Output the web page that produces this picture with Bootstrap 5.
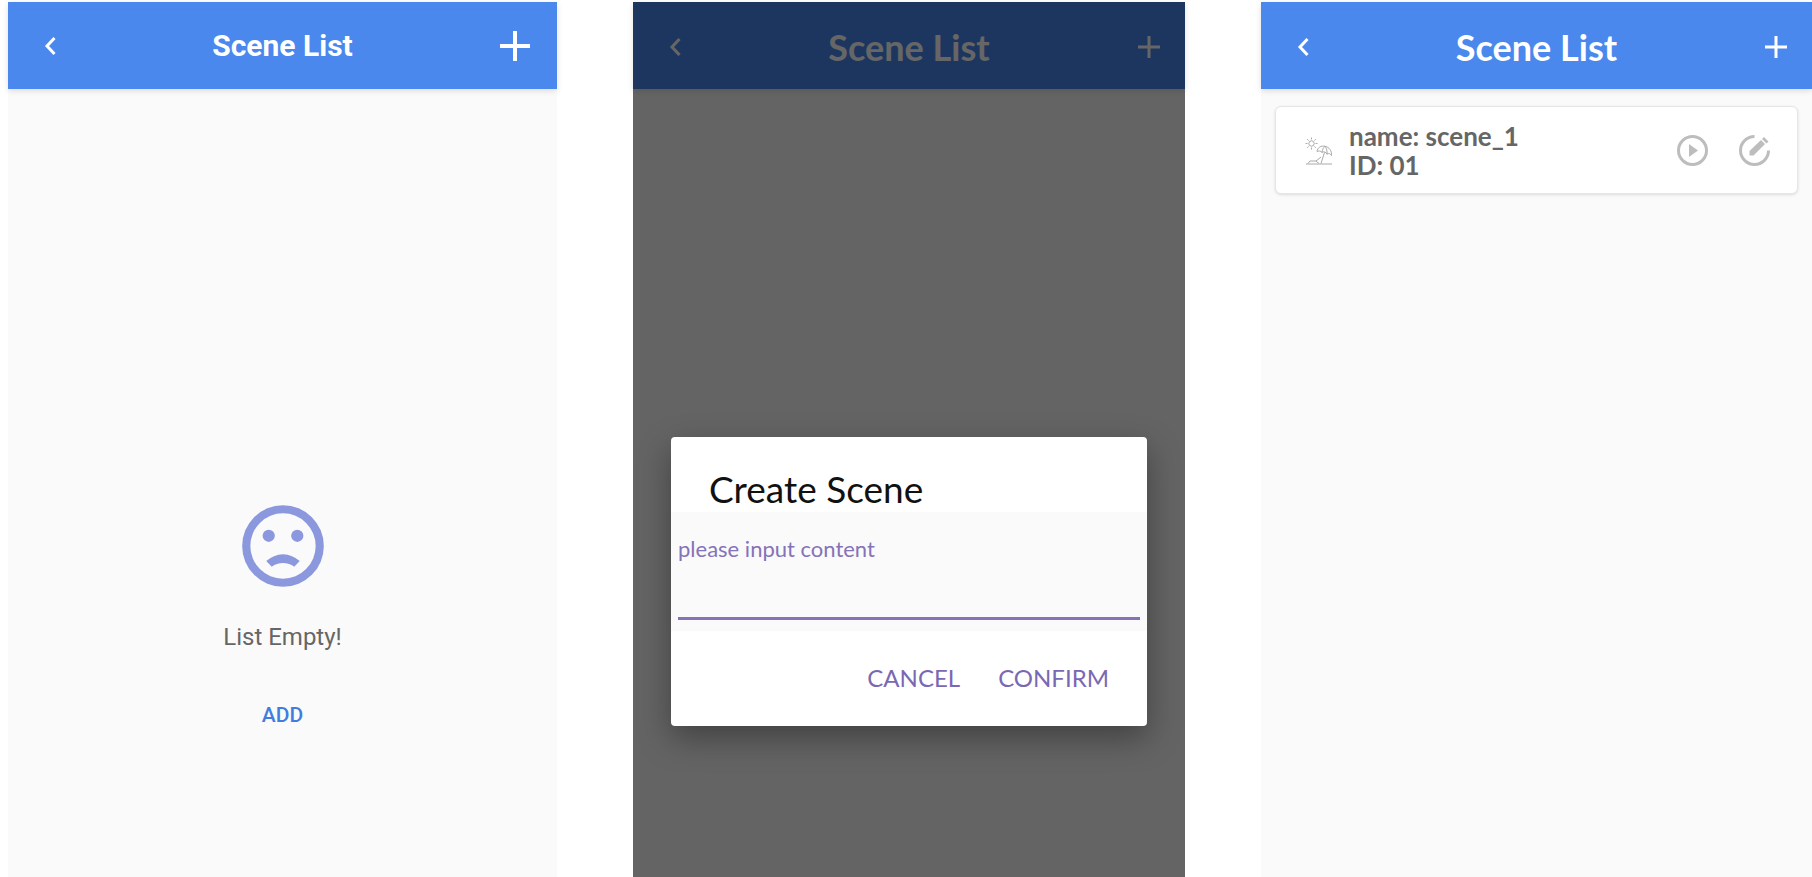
<!DOCTYPE html>
<html lang="en">
<head>
<meta charset="utf-8">
<meta name="viewport" content="width=device-width, initial-scale=1">
<title>Scene List</title>
<link href="https://cdn.jsdelivr.net/npm/bootstrap@5.3.0/dist/css/bootstrap.min.css" rel="stylesheet">
<style>
  body { background: #fff; font-family: Lato, "Open Sans", sans-serif; }
  .screens { display: grid; grid-template-columns: 549fr 552fr 551fr; column-gap: 76px; padding: 2px 0 0 8px; }
  .screen { background: #fafafa; }
  .font-roboto { font-family: Roboto, sans-serif; }
  .topbar { background: #4a88ed; height: 87px; padding: 2px 17px 0; box-shadow: 0 2px 6px rgba(0,0,0,.12); color: #fff; }
  .topbar h1 { font-size: 36px; line-height: 40px; font-weight: 700; }
  .tool { width: 38px; height: 48px; padding: 0; border: 0; color: inherit; display: flex; align-items: center; justify-content: center; }
  .tool:hover { color: inherit; }
  .tool-back { padding-left: 12px; }
  .font-roboto .topbar { padding: 0 23px; }
  .font-roboto .topbar h1 { font-size: 30px; }
  .font-roboto .tool-back { padding-left: 0; }
  svg { display: block; flex: none; }
  .empty { padding-top: 408px; color: #666; }
  .empty p { font-size: 24px; line-height: 32px; margin: 26px 0 40px; }
  .link-add { color: #3f7ee0; font-size: 21px; line-height: 28px; font-weight: 500; padding: 8px; border: 0; }
  .dim { background: rgba(0,0,0,.6); padding: 435px 38px 0; }
  .dialog-box { background: #fff; border-radius: 4px; box-shadow: 0 12px 32px rgba(0,0,0,.35); color: #111; }
  .dialog-box h2 { font-size: 37px; line-height: 44px; font-weight: 400; margin: 0; padding: 30px 38px 1px; }
  .field { background: #fafafa; padding: 22px 7px 11px; height: 119px; }
  .field label { display: block; font-size: 22px; line-height: 30px; color: #8572b9; }
  .field input { height: 56px; padding: 0; border: 0; border-bottom: 3px solid #8572b9; border-radius: 0; background: transparent; }
  .actions { padding: 27px 30px 28px; gap: 22px; }
  .actions button { color: #7a68b3; font-size: 24px; line-height: 24px; padding: 8px; border: 0; }
  .scene-item { margin: 17px 14px 0; height: 88px; padding: 1px 24px 0 29px; border: 1px solid #e6e6e6; border-radius: 6px; background: #fff; box-shadow: 0 1px 3px rgba(0,0,0,.12); color: #666; }
  .scene-text { font-size: 26px; line-height: 29px; font-weight: 700; }
  .muted-tool { color: #bdbdbd; }
</style>
</head>
<body>
<main class="screens min-vh-100">
  <section class="screen font-roboto">
    <header class="topbar d-flex align-items-center justify-content-between">
      <button class="btn tool tool-back" aria-label="Back"><svg width="16" height="22" viewBox="0 0 16 22" fill="none" stroke="currentColor" stroke-width="3"><path d="M12.500 3L5 11l7.500 8"/></svg></button>
      <h1 class="m-0">Scene List</h1>
      <button class="btn tool" aria-label="Add scene"><svg width="30" height="30" viewBox="0 0 30 30" fill="none" stroke="currentColor" stroke-width="4"><path d="M15 0v30M0 15h30"/></svg></button>
    </header>
    <div class="empty d-flex flex-column align-items-center">
      <svg width="98" height="98" viewBox="0 0 24 24" fill="#8b98de"><path d="M12 2a10 10 0 1 0 0 20 10 10 0 0 0 0-20zm0 18a8 8 0 1 1 0-16 8 8 0 0 1 0 16z"/><circle cx="8.500" cy="9.500" r="1.500"/><circle cx="15.500" cy="9.500" r="1.500"/><path d="M12 14a6.400 6.400 0 0 0-4.100 1.700l1.350 1.400a4.600 4.600 0 0 1 5.500 0l1.350-1.400A6.400 6.400 0 0 0 12 14z"/></svg>
      <p>List Empty!</p>
      <button class="btn link-add">ADD</button>
    </div>
  </section>

  <section class="screen position-relative">
    <header class="topbar d-flex align-items-center justify-content-between">
      <button class="btn tool tool-back" aria-label="Back"><svg width="16" height="22" viewBox="0 0 16 22" fill="none" stroke="currentColor" stroke-width="3"><path d="M12.500 3L5 11l7.500 8"/></svg></button>
      <h1 class="m-0">Scene List</h1>
      <button class="btn tool" aria-label="Add scene"><svg width="22" height="22" viewBox="0 0 22 22" fill="none" stroke="currentColor" stroke-width="3"><path d="M11 0v22M0 11h22"/></svg></button>
    </header>
    <div class="dim position-absolute top-0 start-0 w-100 h-100">
      <form class="dialog-box" role="dialog" aria-labelledby="dlg-title">
        <h2 id="dlg-title">Create Scene</h2>
        <div class="field">
          <label for="scene-name">please input content</label>
          <input id="scene-name" type="text" class="form-control">
        </div>
        <div class="actions d-flex justify-content-end">
          <button type="button" class="btn">CANCEL</button>
          <button type="button" class="btn">CONFIRM</button>
        </div>
      </form>
    </div>
  </section>

  <section class="screen">
    <header class="topbar d-flex align-items-center justify-content-between">
      <button class="btn tool tool-back" aria-label="Back"><svg width="16" height="22" viewBox="0 0 16 22" fill="none" stroke="currentColor" stroke-width="3"><path d="M12.500 3L5 11l7.500 8"/></svg></button>
      <h1 class="m-0">Scene List</h1>
      <button class="btn tool" aria-label="Add scene"><svg width="22" height="22" viewBox="0 0 22 22" fill="none" stroke="currentColor" stroke-width="3"><path d="M11 0v22M0 11h22"/></svg></button>
    </header>
    <article class="scene-item d-flex align-items-center">
      <svg width="28" height="28" viewBox="0 0 28 28" fill="none" stroke="#aaa" stroke-width="1"><circle cx="6.500" cy="6.500" r="2.700"/><path d="M6.500 .5v2M6.500 10.500v2M.5 6.500h2M10.500 6.500h2M2.200 2.200l1.400 1.400M9.400 9.400l1.400 1.400M2.200 10.800l1.400-1.400M9.400 3.600l1.400-1.400"/><path d="M12 14.500c.5-4 4-6 8-5.300s7 4.800 6.500 9.300c-1.200-2-2.800-2.600-4.500-1.300-1-2.200-3-3-5-1.800-1.300-1.500-3-1.800-5-.9zM17 15.400c.5-3 1.500-5 3-6.200 1.700 2 2.300 5 2 8M19.500 15.500L16 26.500M1 27h26M3 26.500l2-2.500h6l5-4M11 24l3 2.500"/></svg>
      <div class="scene-text flex-grow-1 ms-3">name: scene_1<br>ID: 01</div>
      <div class="d-flex gap-4 muted-tool">
        <button class="btn tool" aria-label="Play scene"><svg width="31" height="31" viewBox="0 0 31 31" fill="none" stroke="currentColor" stroke-width="3"><circle cx="15.500" cy="15.500" r="14"/><path d="M12 9l9 6.500-9 6.500z" fill="currentColor" stroke="none"/></svg></button>
        <button class="btn tool" aria-label="Edit scene"><svg width="31" height="31" viewBox="0 0 31 31" fill="none" stroke="currentColor" stroke-width="3"><path d="M15.500 1.500a14 14 0 1 0 14 14"/><path d="M10.500 20.500v-4.500L22 5l4 4-11.500 11.500zM23 4l2-2 4.500 4.500-2 2z" fill="currentColor" stroke="none"/></svg></button>
      </div>
    </article>
  </section>
</main>
<script src="https://cdn.jsdelivr.net/npm/bootstrap@5.3.0/dist/js/bootstrap.bundle.min.js"></script>
</body>
</html>
